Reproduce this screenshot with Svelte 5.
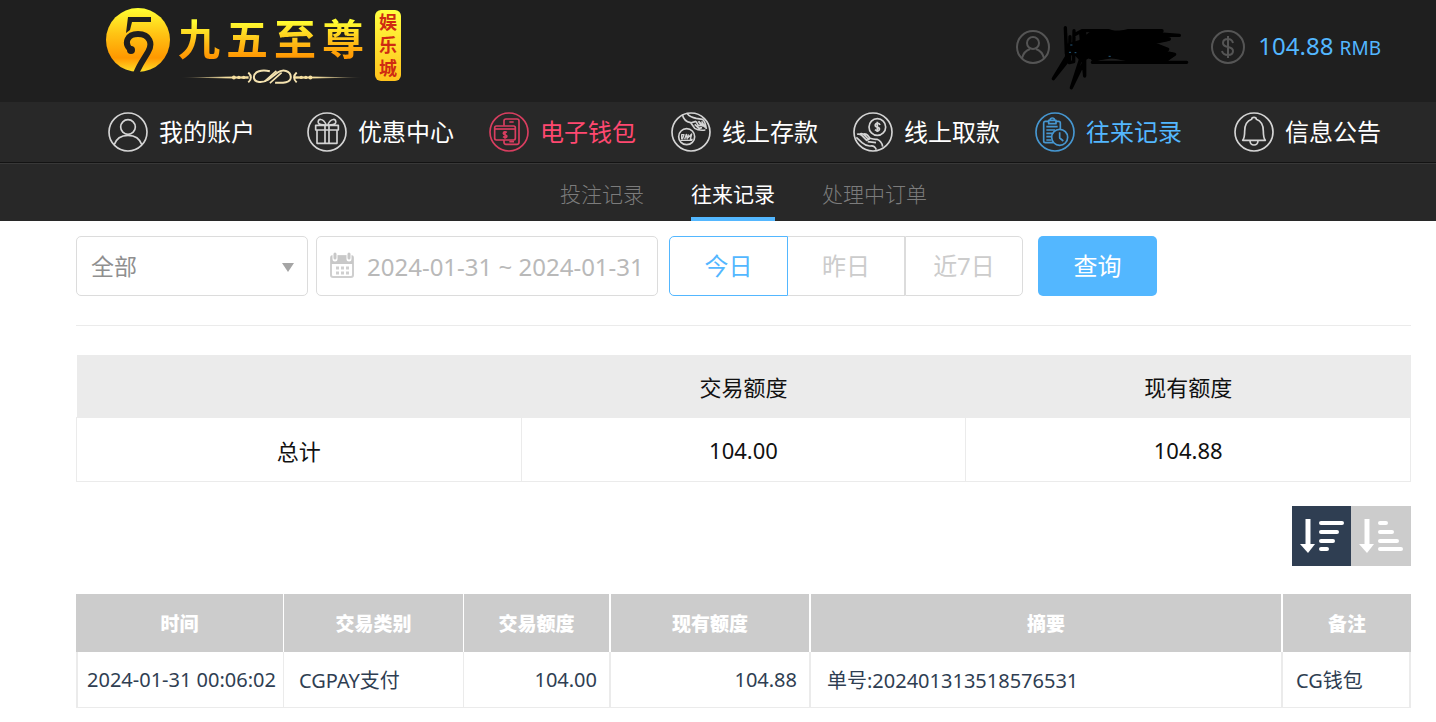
<script>
  const menu = [
    { id: 'account', label: '我的账户' },
    { id: 'gift', label: '优惠中心' },
    { id: 'wallet', label: '电子钱包' },
    { id: 'deposit', label: '线上存款' },
    { id: 'withdraw', label: '线上取款' },
    { id: 'history', label: '往来记录' },
    { id: 'notice', label: '信息公告' }
  ];
  const tabs = ['投注记录', '往来记录', '处理中订单'];
  const ranges = ['今日', '昨日', '近7日'];
  const records = [
    {
      time: '2024-01-31 00:06:02',
      type: 'CGPAY支付',
      amount: '104.00',
      balance: '104.88',
      summary: '单号:202401313518576531',
      note: 'CG钱包'
    }
  ];

  let tab = $state('往来记录');
  let range = $state('今日');
  let descending = $state(true);
  let dates = $state('2024-01-31 ~ 2024-01-31');
</script>

<header class="top">
  <a class="logo" href="#home" aria-label="九五至尊娱乐城">
    <svg class="mark" viewBox="0 0 64 64" aria-hidden="true">
      <defs>
        <linearGradient id="gold" x1="0" y1="0" x2="0" y2="1">
          <stop offset="0" stop-color="#ffff32" />
          <stop offset="0.4" stop-color="#ffc414" />
          <stop offset="0.78" stop-color="#ff9800" />
          <stop offset="1" stop-color="#ffe02a" />
        </linearGradient>
      </defs>
      <circle cx="32" cy="32" r="32" fill="url(#gold)" />
      <path d="M22 9H45V14H26L24 22L20 25Z" fill="#1f1f1f" />
      <path d="M24 41C18 35 21 26 32 26C44 26 47 36 42 44C38 51 33 57 30 66" fill="none" stroke="#1f1f1f" stroke-width="6" />
      <circle cx="25" cy="42" r="4" fill="#1f1f1f" />
    </svg>
    <span class="brand">
      <span class="name"><span>九</span><span>五</span><span>至</span><span>尊</span></span>
      <svg class="flourish" viewBox="265 204 560 52" aria-hidden="true">
        <defs>
          <linearGradient id="fade" x1="265" x2="825" y1="0" y2="0" gradientUnits="userSpaceOnUse">
            <stop offset="0" stop-color="#f5dfa0" stop-opacity="0" />
            <stop offset="0.25" stop-color="#f5dfa0" />
            <stop offset="0.75" stop-color="#f5dfa0" />
            <stop offset="1" stop-color="#f5dfa0" stop-opacity="0" />
          </linearGradient>
        </defs>
        <path d="M265 233L475 229V237ZM825 233L615 229V237Z" fill="url(#fade)" />
        <g fill="#f5dfa0">
          <circle cx="430" cy="233" r="6" /><circle cx="445" cy="233" r="5" /><circle cx="460" cy="233" r="5" />
          <circle cx="636" cy="233" r="5" /><circle cx="650" cy="233" r="5" /><circle cx="664" cy="233" r="6" />
        </g>
        <g fill="none" stroke="#f5e3b0" stroke-width="6">
          <path d="M474 218Q490 233 474 248M622 218Q606 233 622 248" />
          <path d="M540 214C515 208 492 214 491 232C492 251 518 250 535 240L562 219C580 206 603 212 604 231C605 250 580 250 556 249" />
          <path d="M524 245L560 213M540 250L576 218" stroke-width="5" />
        </g>
      </svg>
    </span>
    <span class="badge"><span>娱</span><span>乐</span><span>城</span></span>
  </a>

  <div class="user">
    <svg class="round" viewBox="0 0 34 34" aria-hidden="true">
      <circle cx="17" cy="17" r="16" />
      <circle cx="17" cy="13" r="6" />
      <path d="M6 28Q8 21 14 19M28 28Q26 21 20 19" />
    </svg>
    <svg class="scribble" viewBox="150 -21 420 264" aria-hidden="true">
      <path d="M196 53L199 130L205 150L160 206L200 140L197 70M222 62L221 155L208 158L210 80M242 66L250 160L214 233L244 140V66L254 70V198L249 150M222 75L246 62H325L350 70L385 62H486L460 70L538 76H420L508 87L450 96L500 120L440 115L524 133L500 148H400L340 140L278 148L300 130L270 140L290 115L240 140L230 110L290 75M277 157H560" />
      <path class="fill" d="M240 95L275 68L485 64L470 82L505 88L455 99L503 118L470 124L520 134L502 148L390 150L330 138L290 148L265 140L245 150L225 130L205 132V105Z" />
      <path class="spark" d="M212 105H216M208 127H212M225 128H228M327 139H331" />
    </svg>
    <svg class="round coin" viewBox="0 0 34 34" aria-hidden="true">
      <circle cx="17" cy="17" r="16" />
      <path d="M17 6V28M22 13Q21 9 17 9Q12 9 12 13Q12 16 17 17Q22 18 22 21Q22 25 17 25Q12 25 11 21" />
    </svg>
    <span class="money">104.88 <small>RMB</small></span>
  </div>
</header>

<nav class="menu" aria-label="主菜单">
  {#each menu as item}
    <a class="entry {item.id}" href="#{item.id}">
      {#if item.id === 'account'}
        <svg viewBox="56 37 120 120" aria-hidden="true">
          <circle cx="116" cy="97" r="57" /><circle cx="116" cy="82" r="22" />
          <path d="M74 136Q84 107 116 107Q148 107 158 136" />
        </svg>
      {:else if item.id === 'gift'}
        <svg viewBox="651 37 120 120" aria-hidden="true">
          <circle cx="711" cy="97" r="57" />
          <path d="M677 77H745V91H677ZM681 91V131H741V91M705 77V131M717 77V131M709 76C698 52 682 58 685 69Q687 75 709 76M713 76C724 52 740 58 737 69Q735 75 713 76" />
        </svg>
      {:else if item.id === 'wallet'}
        <svg viewBox="27 37 120 120" aria-hidden="true">
          <circle cx="87" cy="97" r="57" />
          <path d="M72 78V64Q72 58 78 58H111Q117 58 117 64V128Q117 134 111 134H78Q72 134 72 128V121M88 67H101M88 126H102" />
          <rect x="44" y="79" width="62" height="42" rx="5" /><path d="M44 88H106" />
          <path d="M81 98Q71 94 70 101Q71 105 76 106Q82 108 80 112Q76 116 69 111M75 94V117" />
        </svg>
      {:else if item.id === 'deposit'}
        <svg viewBox="573 37 120 120" aria-hidden="true">
          <circle cx="633" cy="97" r="57" /><circle cx="620" cy="111" r="24" />
          <path d="M605 119V105H612L607 119M614 119L619 104L622 119M625 104L624 114L635 103L631 119H638M601 122H637" stroke-width="4" />
          <path d="M607 44Q611 65 632 69L644 86Q656 94 676 91M622 42Q630 52 649 56L667 59Q675 63 679 88M631 70L648 65M648 65L655 78L664 77L655 65M656 65L671 81M665 65L676 84M644 74L657 86L666 84" />
        </svg>
      {:else if item.id === 'withdraw'}
        <svg viewBox="41 37 120 120" aria-hidden="true">
          <circle cx="101" cy="97" r="57" /><circle cx="114" cy="82" r="25" />
          <path d="M122 76Q120 70 113 71Q106 73 108 79Q110 82 115 83Q122 85 120 90Q115 97 107 90M114 66V97" />
          <path d="M53 104Q61 101 68 108L82 122L91 117M60 104Q68 99 76 107L87 118M73 103Q80 101 86 108L92 116Q104 120 113 119Q127 124 130 141M51 113L68 129Q81 140 93 139Q105 136 111 150M85 126L110 129" />
        </svg>
      {:else if item.id === 'history'}
        <svg viewBox="587 37 120 120" aria-hidden="true">
          <circle cx="647" cy="97" r="57" />
          <path d="M627 65H617Q613 65 613 70V124Q613 129 618 129H642M650 65H658Q663 65 663 70V88M628 62H650V72H628ZM632 61Q633 55 639 55Q645 55 646 61M621 81H655M621 91H647M621 101H640M621 111H635M621 121H636" />
          <circle cx="661" cy="113" r="24" /><path d="M661 98V115L672 124" />
        </svg>
      {:else}
        <svg viewBox="102 37 120 120" aria-hidden="true">
          <circle cx="162" cy="97" r="57" />
          <path d="M128 122Q134 115 134 95Q134 66 155 59Q155 53 162 53Q169 53 169 59Q190 66 190 95Q190 115 196 122ZM150 124Q151 136 162 136Q173 136 174 124" />
        </svg>
      {/if}
      <span>{item.label}</span>
    </a>
  {/each}
</nav>

<nav class="tabs" aria-label="记录类型">
  {#each tabs as name}
    <button type="button" class:active={tab === name} onclick={() => (tab = name)}>{name}</button>
  {/each}
</nav>

<main>
  <form class="filters" onsubmit={(e) => e.preventDefault()}>
    <div class="picker">
      <select aria-label="交易类别">
        <option>全部</option>
      </select>
      <svg viewBox="0 0 12 9" aria-hidden="true"><path d="M0 0H12L6 9Z" /></svg>
    </div>
    <label class="dates">
      <svg viewBox="0 0 24 28" aria-hidden="true">
        <rect x="1" y="4" width="22" height="21" rx="2" fill="#fff" stroke="#cfcfcf" stroke-width="2" />
        <path d="M1 4H23V12H1Z" fill="#c8c8c8" />
        <path d="M5 1V7M19 1V7" stroke="#fff" stroke-width="5" stroke-linecap="round" />
        <path d="M5 2V6M19 2V6" stroke="#c8c8c8" stroke-width="3" stroke-linecap="round" />
        <path d="M6 16H9M11 16H14M16 16H19M6 21H9M11 21H14M16 21H19" stroke="#cfcfcf" stroke-width="3" />
      </svg>
      <input type="text" aria-label="日期" bind:value={dates} />
    </label>
    <div class="ranges">
      {#each ranges as name}
        <button type="button" class:active={range === name} onclick={() => (range = name)}>{name}</button>
      {/each}
    </div>
    <button class="query" type="submit">查询</button>
  </form>

  <table class="totals">
    <thead>
      <tr><th></th><th>交易额度</th><th>现有额度</th></tr>
    </thead>
    <tbody>
      <tr><th>总计</th><td>104.00</td><td>104.88</td></tr>
    </tbody>
  </table>

  <div class="sort">
    <button type="button" aria-label="降序" class:active={descending} onclick={() => (descending = true)}>
      <svg viewBox="0 0 60 60" aria-hidden="true">
        <path d="M16 13V40" stroke-width="5" stroke-linecap="butt" /><path class="head" d="M8 38H23L16 47Z" />
        <path d="M29 17H50M29 26H45M29 35H41M29 43H35" />
      </svg>
    </button>
    <button type="button" aria-label="升序" class:active={!descending} onclick={() => (descending = false)}>
      <svg viewBox="0 0 60 60" aria-hidden="true">
        <path d="M16 13V40" stroke-width="5" stroke-linecap="butt" /><path class="head" d="M8 38H23L16 47Z" />
        <path d="M29 17H35M29 26H41M29 35H46M29 43H50" />
      </svg>
    </button>
  </div>

  <table class="records">
    <colgroup>
      <col class="c-time" /><col class="c-type" /><col class="c-amount" /><col class="c-balance" /><col /><col class="c-note" />
    </colgroup>
    <thead>
      <tr><th>时间</th><th>交易类别</th><th>交易额度</th><th>现有额度</th><th>摘要</th><th>备注</th></tr>
    </thead>
    <tbody>
      {#each records as r}
        <tr>
          <td class="time">{r.time}</td>
          <td>{r.type}</td>
          <td class="num">{r.amount}</td>
          <td class="num">{r.balance}</td>
          <td class="summary">{r.summary}</td>
          <td>{r.note}</td>
        </tr>
      {/each}
    </tbody>
  </table>
</main>

<style>
  :global(body) {
    margin: 0;
    background: #fff;
    font-family: 'Noto Sans', 'Noto Sans CJK SC', sans-serif;
  }
  button, input, select {
    font-family: inherit;
    margin: 0;
    box-sizing: border-box;
  }
  button { cursor: pointer; padding: 0; border: 0; background: none; }
  a { text-decoration: none; color: inherit; }
  svg { display: block; flex: none; }

  .top {
    display: flex;
    justify-content: space-between;
    align-items: flex-start;
    height: 102px;
    padding: 0 55px 0 106px;
    background: #1f1f1f;
  }
  .logo { display: flex; padding-top: 8px; gap: 8px; }
  .mark { width: 64px; height: 64px; }
  .brand { display: flex; flex-direction: column; }
  .name {
    display: flex;
    gap: 6px;
    padding-top: 2px;
    font-size: 42px;
    font-weight: 700;
    line-height: 58px;
    color: transparent;
    background: linear-gradient(#ffff32 22%, #ffb814 60%, #ff9200 85%);
    background-clip: text;
  }
  .flourish { width: 187px; height: 17px; }
  .badge {
    display: flex;
    flex-direction: column;
    justify-content: center;
    align-self: flex-start;
    margin: 2px 0 0 2px;
    height: 71px;
    width: 26px;
    border-radius: 6px;
    background: linear-gradient(#ffff40, #ffc21c);
    color: #cf2a12;
    font-size: 18px;
    font-weight: 700;
    line-height: 23px;
    text-align: center;
  }

  .user { display: flex; align-items: center; padding-top: 3px; }
  .round { width: 34px; height: 34px; fill: none; stroke: #555; stroke-width: 2; }
  .coin { margin: 0 13px 0 21px; }
  .scribble { width: 140px; height: 88px; fill: none; stroke: #000; stroke-width: 10; stroke-linecap: round; stroke-linejoin: round; }
  .scribble .fill { fill: #000; }
  .scribble .spark { stroke: #3787bd; stroke-width: 2; }
  .money { font-size: 24px; line-height: 32px; color: #53b7ff; }
  .money small { font-size: 19px; }

  .menu {
    display: flex;
    justify-content: space-between;
    padding: 0 55px 0 108px;
    height: 60px;
    background: #282828;
    border-bottom: 1px solid #131313;
  }
  .entry { display: flex; align-items: center; gap: 11px; color: #fff; font-size: 24px; font-weight: 400; line-height: 36px; white-space: nowrap; }
  .entry svg { width: 40px; height: 40px; fill: none; stroke: #d4d4d4; stroke-width: 5; stroke-linejoin: round; }
  .account { margin-right: 17px; }
  .notice { margin-left: 17px; }
  .wallet { color: #ff4870; }
  .wallet svg { stroke: #d93e60; }
  .history { color: #53b7ff; }
  .history svg { stroke: #4697d1; }

  .tabs {
    display: flex;
    justify-content: center;
    gap: 47px;
    padding-left: 51px;
    border-top: 1px solid #383838;
    background: #282828;
  }
  .tabs button { height: 57px; padding-top: 4px; font-size: 21px; font-weight: 300; color: #7c7c7c; border-bottom: 4px solid transparent; }
  .tabs .active { color: #fff; font-weight: 400; border-color: #53b7ff; }

  main { padding: 15px 25px 14px 76px; }
  .filters { display: flex; padding-bottom: 29px; border-bottom: 1px solid #ebebeb; }
  .picker { position: relative; width: 232px; margin-right: 8px; }
  .picker select {
    appearance: none;
    width: 100%;
    height: 60px;
    padding: 0 14px;
    border: 1px solid #dcdcdc;
    border-radius: 5px;
    background: #fff;
    color: #8f8f8f;
    font-size: 23px;
  }
  .picker svg { position: absolute; right: 14px; top: 27px; width: 12px; height: 9px; fill: #a5a5a5; pointer-events: none; }
  .dates {
    display: flex;
    align-items: center;
    gap: 12px;
    box-sizing: border-box;
    width: 342px;
    height: 60px;
    margin-right: 11px;
    padding-left: 12px;
    border: 1px solid #dcdcdc;
    border-radius: 5px;
  }
  .dates svg { width: 26px; height: 28px; }
  .dates input { flex: 1; min-width: 0; padding: 0; border: 0; outline: 0; background: none; color: #b9b9b9; font-size: 24px; }
  .ranges { display: flex; margin-right: 15px; }
  .ranges button { width: 118px; height: 60px; padding-bottom: 3px; border: 1px solid #dcdcdc; color: #ccc; font-size: 24px; }
  .ranges button:nth-child(2) { width: 117px; border-left: 0; }
  .ranges button:first-child { border-radius: 5px 0 0 5px; width: 119px; }
  .ranges button:last-child { border-radius: 0 5px 5px 0; }
  .ranges .active { border-color: #53b7ff; color: #53b7ff; }
  .query { width: 119px; height: 60px; padding-bottom: 3px; border-radius: 5px; background: #53b7ff; color: #fff; font-size: 24px; }

  table { width: 100%; border-collapse: collapse; table-layout: fixed; }
  th, td { padding: 0; }
  .totals { margin-top: 29px; text-align: center; color: #111; font-size: 22px; }
  .totals th { font-weight: 400; }
  .totals thead th { height: 62px; background: #ebebeb; }
  .totals tbody th, .totals td { height: 63px; border: 1px solid #ebebeb; }

  .sort { display: flex; justify-content: flex-end; margin: 24px 0 28px; }
  .sort button { width: 60px; height: 60px; background: #ccc; }
  .sort button:first-child { width: 59px; }
  .sort .active { background: #2f3e52; }
  .sort svg { width: 60px; height: 60px; fill: none; stroke: #fff; stroke-width: 4; stroke-linecap: round; }
  .sort .head { fill: #fff; stroke: none; }

  .records { font-size: 20px; color: #2f3e52; border-collapse: separate; border-spacing: 0; }
  .c-time { width: 207px; }
  .c-type { width: 180px; }
  .c-amount { width: 146px; }
  .c-balance { width: 200px; }
  .c-note { width: 130px; }
  .records thead th { height: 58px; background: #ccc; color: #fff; font-size: 19px; font-weight: 900; }
  .records thead th + th { border-left: 1px solid #fff; }
  .records thead th:nth-child(n + 4) { border-left-width: 2px; }
  .records td { height: 55px; padding: 0 15px; border-left: 1px solid #ebebeb; border-bottom: 1px solid #ebebeb; white-space: nowrap; }
  .records td:first-child, .records td:nth-child(n + 4) { border-left-width: 2px; }
  .records td:last-child { padding-left: 13px; border-right: 2px solid #ebebeb; }
  .records .time { padding: 0 0 0 9px; }
  .records .num { text-align: right; padding-right: 12px; }
  .records .summary { padding-left: 16px; }
</style>
